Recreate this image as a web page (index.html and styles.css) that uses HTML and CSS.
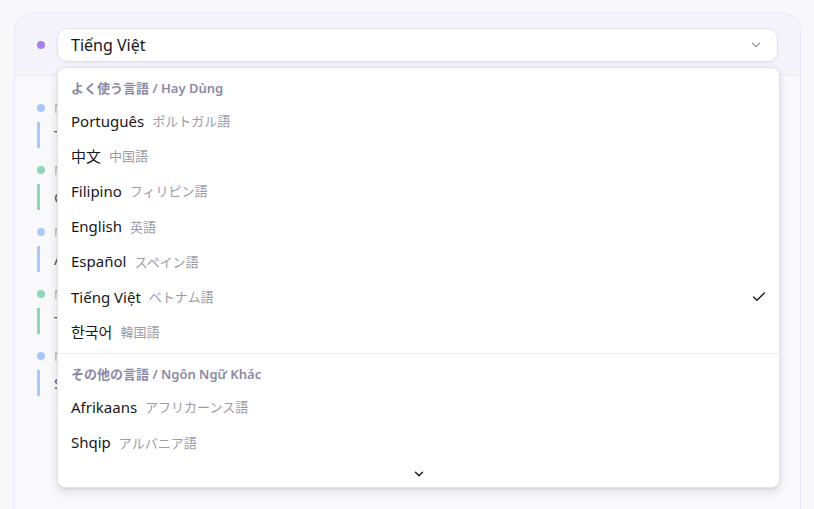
FILE: index.html
```html
<!DOCTYPE html>
<html lang="vi">

<head>
    <meta charset="UTF-8">
    <meta name="viewport" content="width=device-width, initial-scale=1.0">
    <title>Chọn ngôn ngữ</title>
    <link rel="stylesheet" href="styles.css">
</head>

<body>
    <div class="panel">
        <div class="panel-head">
            <span class="dot dot-purple"></span>
            <div class="lang-select">
                <button class="select-trigger" type="button">
                    <span>Tiếng Việt</span>
                    <svg class="chev" width="14" height="14" viewBox="0 0 24 24" fill="none" stroke="currentColor"
                        stroke-width="2" stroke-linecap="round" stroke-linejoin="round">
                        <polyline points="6 9 12 15 18 9"></polyline>
                    </svg>
                </button>

                <!-- open list of languages -->
                <div class="select-menu">
                    <div class="group-label">よく使う言語 / Hay Dùng</div>
                    <div class="option"><span class="name">Português</span><span class="alt">ポルトガル語</span></div>
                    <div class="option"><span class="name">中文</span><span class="alt">中国語</span></div>
                    <div class="option"><span class="name">Filipino</span><span class="alt">フィリピン語</span></div>
                    <div class="option"><span class="name">English</span><span class="alt">英語</span></div>
                    <div class="option"><span class="name">Español</span><span class="alt">スペイン語</span></div>
                    <div class="option selected"><span class="name">Tiếng Việt</span><span class="alt">ベトナム語</span>
                        <svg class="check" width="16" height="16" viewBox="0 0 24 24" fill="none" stroke="currentColor"
                            stroke-width="2" stroke-linecap="round" stroke-linejoin="round">
                            <polyline points="20 6 9 17 4 12"></polyline>
                        </svg>
                    </div>
                    <div class="option"><span class="name">한국어</span><span class="alt">韓国語</span></div>
                    <div class="separator"></div>
                    <div class="group-label">その他の言語 / Ngôn Ngữ Khác</div>
                    <div class="option"><span class="name">Afrikaans</span><span class="alt">アフリカーンス語</span></div>
                    <div class="option"><span class="name">Shqip</span><span class="alt">アルバニア語</span></div>
                    <div class="scroll-down">
                        <svg width="14" height="14" viewBox="0 0 24 24" fill="none" stroke="currentColor"
                            stroke-width="2.4" stroke-linecap="round" stroke-linejoin="round">
                            <polyline points="6 9 12 15 18 9"></polyline>
                        </svg>
                    </div>
                </div>
            </div>
        </div>

        <div class="panel-body">
            <div class="msg">
                <div class="meta"><span class="dot dot-blue"></span>Nguyễn An</div>
                <div class="text bar-blue">Tôi sẽ đến muộn một chút.</div>
            </div>
            <div class="msg">
                <div class="meta"><span class="dot dot-green"></span>Minh</div>
                <div class="text bar-green">Cũng được, không sao.</div>
            </div>
            <div class="msg">
                <div class="meta"><span class="dot dot-blue"></span>Nguyễn An</div>
                <div class="text bar-blue">Anh đã gửi tài liệu chưa?</div>
            </div>
            <div class="msg">
                <div class="meta"><span class="dot dot-green"></span>Minh</div>
                <div class="text bar-green">Tôi gửi rồi nhé.</div>
            </div>
            <div class="msg">
                <div class="meta"><span class="dot dot-blue"></span>Nguyễn An</div>
                <div class="text bar-blue">Sáng mai gặp lại nhé.</div>
            </div>
        </div>
    </div>
</body>

</html>
```

FILE: styles.css
```css
body {
    margin: 0;
    padding: 12px 13px 0 14px;
    background-color: #f8f8fa;
    font-family: "Noto Sans", "Noto Sans CJK JP", sans-serif;
    color: #17171c;
    overflow: hidden;
    height: 509px;
    box-sizing: border-box;
}

.panel {
    background-color: #f9f9fc;
    border: 1px solid #e9e7f4;
    border-bottom: none;
    border-radius: 20px 20px 0 0;
    height: 497px;
}

.panel-head {
    display: flex;
    align-items: center;
    gap: 12px;
    padding: 15px 22px 13px 22px;
    background-color: #f5f4fc;
    border-bottom: 1px solid #ebe9f5;
    border-radius: 20px 20px 0 0;
}

.dot {
    display: inline-block;
    width: 8px;
    height: 8px;
    border-radius: 50%;
    flex-shrink: 0;
}

.dot-purple {
    background-color: #a57ff0;
}

.dot-blue {
    background-color: #a9c9f6;
}

.dot-green {
    background-color: #8fd7b4;
}

.lang-select {
    position: relative;
    flex: 1;
}

.select-trigger {
    display: flex;
    align-items: center;
    justify-content: space-between;
    width: 100%;
    height: 34px;
    padding: 0 14px 0 13px;
    background-color: #ffffff;
    border: 1px solid #e3e0f1;
    border-radius: 10px;
    box-shadow: 0 1px 2px rgba(60, 50, 120, 0.08);
    font-family: inherit;
    font-size: 16px;
    color: #17171c;
}

.chev {
    color: #9a98a8;
}

.select-menu {
    position: absolute;
    top: 39px;
    left: 0;
    right: -2px;
    height: 421px;
    box-sizing: border-box;
    padding: 4px 0 0 0;
    background-color: #ffffff;
    border: 1px solid #e4e3ea;
    border-radius: 8px;
    box-shadow: 0 4px 10px rgba(30, 30, 60, 0.12), 0 1px 2px rgba(30, 30, 60, 0.08);
    overflow: hidden;
    z-index: 5;
}

.group-label {
    height: 31px;
    display: flex;
    align-items: center;
    padding: 0 13px;
    font-size: 13px;
    font-weight: 600;
    color: #8b8aa6;
}

.option {
    height: 35.2px;
    display: flex;
    align-items: center;
    gap: 8px;
    padding: 0 13px;
}

.option .name {
    font-size: 15px;
}

.option .alt {
    font-size: 13px;
    color: #9c9ba8;
}

.check {
    margin-left: auto;
    margin-right: -1px;
    color: #17171c;
}

.separator {
    height: 1px;
    margin: 4px 0 4px 0;
    background-color: #ebeaef;
}

.scroll-down {
    display: flex;
    justify-content: center;
    padding-top: 7px;
    color: #17171c;
}

.panel-body {
    padding: 24px 0 0 22px;
}

.msg {
    margin-bottom: 14px;
}

.meta {
    display: flex;
    align-items: center;
    gap: 9px;
    font-size: 12px;
    color: #b4b3c0;
    height: 16px;
}

.text {
    margin: 6px 0 0 0;
    padding: 2px 0 2px 14px;
    font-size: 15px;
    color: #55546a;
    line-height: 22px;
    border-left: 3px solid;
}

.bar-blue {
    border-color: #a9c9f6;
}

.bar-green {
    border-color: #8fd7b4;
}
```
